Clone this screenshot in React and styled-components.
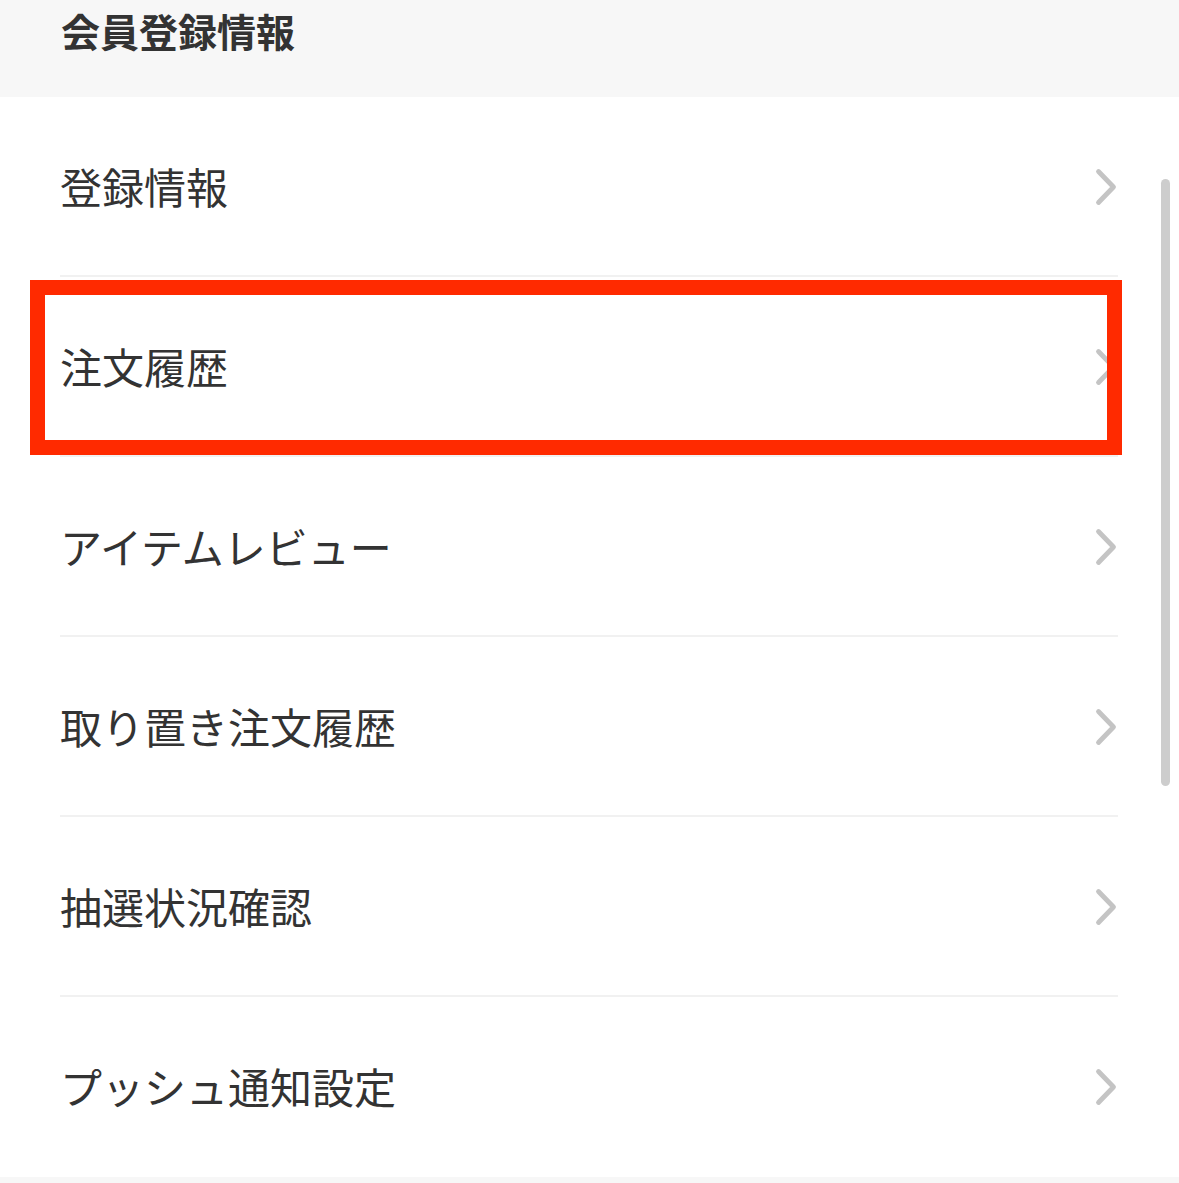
import React from "react";
import styled, { createGlobalStyle } from "styled-components";

const GlobalStyle = createGlobalStyle`
  html, body {
    margin: 0;
    padding: 0;
    background: #ffffff;
  }
  body {
    font-family: "Noto Sans CJK JP", "Noto Sans", sans-serif;
    color: #333333;
    overflow: hidden;
  }
`;

const Page = styled.div`
  position: relative;
  width: 1179px;
  height: 1183px;
  overflow: hidden;
  background: #ffffff;
`;

const Header = styled.div`
  height: 97px;
  background: #f7f7f7;
  padding: 0 61px;
  display: flex;
  align-items: flex-start;
  box-sizing: border-box;
`;

const HeaderTitle = styled.h2`
  margin: 0;
  padding-top: 4px;
  font-size: 39px;
  line-height: 52px;
  font-weight: 700;
  color: #333333;
`;

const Menu = styled.ul`
  list-style: none;
  margin: 0;
  padding: 0 61px 0 60px;
`;

const Item = styled.li`
  position: relative;
  height: 178px;
  display: flex;
  align-items: center;
  justify-content: space-between;
  border-bottom: ${props => (props.last ? "none" : "2px solid #f1f1f1")};
`;

const Label = styled.span`
  font-size: 42px;
  line-height: 1;
  color: #333333;
`;

const Chevron = styled.svg`
  width: 24px;
  height: 40px;
  flex-shrink: 0;
  margin-top: 2px;
`;

const Highlight = styled.div`
  position: absolute;
  top: 3px;
  left: -30px;
  right: -4px;
  bottom: 0;
  border: 15px solid #ff2a00;
  pointer-events: none;
`;

const Footer = styled.div`
  margin-top: 2px;
  height: 6px;
  background: #f7f7f7;
`;

const Scrollbar = styled.div`
  position: absolute;
  top: 179px;
  left: 1161px;
  width: 9px;
  height: 607px;
  border-radius: 5px;
  background: #cdcdcd;
`;

const items = [
  "登録情報",
  "注文履歴",
  "アイテムレビュー",
  "取り置き注文履歴",
  "抽選状況確認",
  "プッシュ通知設定",
];

const ChevronIcon = () => (
  <Chevron viewBox="0 0 24 40">
    <path
      d="M4.5 4.5 L19.5 20 L4.5 35.5"
      fill="none"
      stroke="#c4c4c4"
      strokeWidth="4.8"
      strokeLinecap="round"
      strokeLinejoin="round"
    />
  </Chevron>
);

const App = () => {
  return (
    <Page>
      <GlobalStyle />
      <Header>
        <HeaderTitle>会員登録情報</HeaderTitle>
      </Header>
      <Menu>
        {items.map((label, i) => (
          <Item key={label} last={i === items.length - 1}>
            <Label>{label}</Label>
            <ChevronIcon />
            {i === 1 && <Highlight />}
          </Item>
        ))}
      </Menu>
      <Footer />
      <Scrollbar />
    </Page>
  );
};

export default App;
